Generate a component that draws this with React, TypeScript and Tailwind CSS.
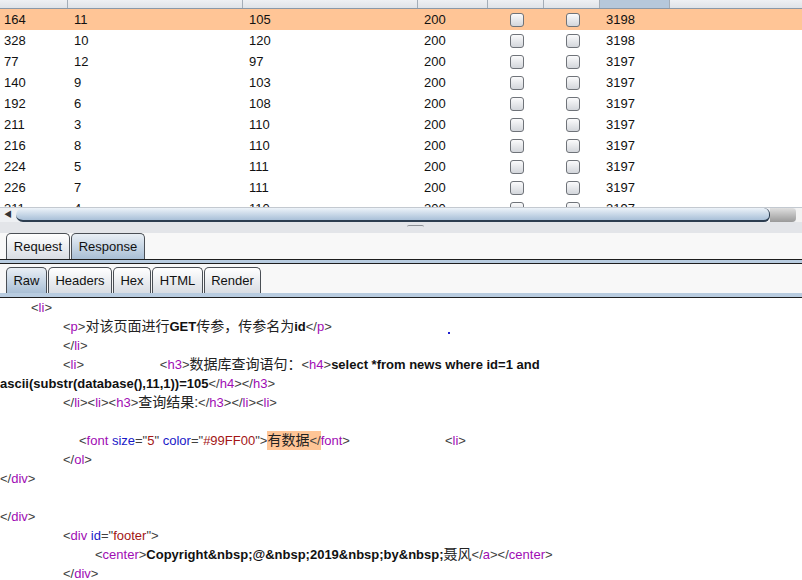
import React from 'react';

type Seg = [string, string];

const rows = [
  ['164', '11', '105', '200', '3198'],
  ['328', '10', '120', '200', '3198'],
  ['77', '12', '97', '200', '3197'],
  ['140', '9', '103', '200', '3197'],
  ['192', '6', '108', '200', '3197'],
  ['211', '3', '110', '200', '3197'],
  ['216', '8', '110', '200', '3197'],
  ['224', '5', '111', '200', '3197'],
  ['226', '7', '111', '200', '3197'],
  ['311', '4', '110', '200', '3197'],
];

const segClass: Record<string, string> = {
  b: 'text-[#404040]',
  t: 'text-[#a00cb4]',
  a: 'text-[#1a1ac8]',
  v: 'text-[#a31515]',
  x: 'text-[#222]',
  B: 'text-[#111] font-bold',
  c: 'text-[#222] text-[14px]',
  h: 'text-[#222] text-[14px] bg-[#ffc596]',
  hb: 'text-[#404040] bg-[#ffc596]',
  g: 'inline-block w-[95px]',
};

// helpers to build tags
const open = (name: string): Seg[] => [['<', 'b'], [name, 't'], ['>', 'b']];
const close = (name: string): Seg[] => [['</', 'b'], [name, 't'], ['>', 'b']];

const lines: { pad: number; segs: Seg[] }[] = [
  { pad: 31, segs: open('li') },
  {
    pad: 63,
    segs: [
      ...open('p'),
      ['对该页面进行', 'c'],
      ['GET', 'B'],
      ['传参，传参名为', 'c'],
      ['id', 'B'],
      ...close('p'),
    ],
  },
  { pad: 63, segs: close('li') },
  {
    pad: 63,
    segs: [
      ...open('li'),
      ['                     ', 'x'],
      ...open('h3'),
      ['数据库查询语句：', 'c'],
      ...open('h4'),
      ['select *from news where id=1 and', 'B'],
    ],
  },
  {
    pad: 0,
    segs: [['ascii(substr(database(),11,1))=105', 'B'], ...close('h4'), ...close('h3')],
  },
  {
    pad: 63,
    segs: [
      ...close('li'),
      ...open('li'),
      ...open('h3'),
      ['查询结果:', 'c'],
      ...close('h3'),
      ...close('li'),
      ...open('li'),
    ],
  },
  { pad: 0, segs: [] },
  {
    pad: 79,
    segs: [
      ['<', 'b'],
      ['font', 't'],
      [' ', 'x'],
      ['size', 'a'],
      ['="', 'b'],
      ['5', 'v'],
      ['"', 'b'],
      [' ', 'x'],
      ['color', 'a'],
      ['="', 'b'],
      ['#99FF00', 'v'],
      ['"', 'b'],
      ['>', 'b'],
      ['有数据', 'h'],
      ['</', 'hb'],
      ['font', 't'],
      ['>', 'b'],
      ['', 'g'],
      ...open('li'),
    ],
  },
  { pad: 63, segs: close('ol') },
  { pad: 0, segs: close('div') },
  { pad: 0, segs: [] },
  { pad: 0, segs: close('div') },
  {
    pad: 63,
    segs: [
      ['<', 'b'],
      ['div', 't'],
      [' ', 'x'],
      ['id', 'a'],
      ['="', 'b'],
      ['footer', 'v'],
      ['"', 'b'],
      ['>', 'b'],
    ],
  },
  {
    pad: 95,
    segs: [
      ...open('center'),
      ['Copyright&nbsp;@&nbsp;2019&nbsp;by&nbsp;', 'B'],
      ['聂风', 'c'],
      ...close('a'),
      ...close('center'),
    ],
  },
  { pad: 63, segs: close('div') },
];

function Checkbox() {
  return (
    <div className="w-[14px] h-[14px] rounded-[3px] border border-[#6f7379] bg-gradient-to-b from-[#fbfbfc] to-[#d3d6db]" />
  );
}

function Tab({ label, active, w }: { label: string; active?: boolean; w: string }) {
  return (
    <div
      className={`${w} h-full flex items-center justify-center rounded-t-[5px] border border-b-0 border-[#4a4f55] text-[13px] text-[#111] ${
        active
          ? 'bg-gradient-to-b from-[#e9eff5] to-[#a9bfd5]'
          : 'bg-gradient-to-b from-[#ffffff] to-[#d9dde3]'
      }`}
    >
      {label}
    </div>
  );
}

export default function App() {
  return (
    <div
      className="w-[802px] h-[580px] overflow-hidden bg-white flex flex-col"
      style={{ fontFamily: '"Liberation Sans", Arial, "Noto Sans CJK SC", sans-serif' }}
    >
      {/* results table */}
      <div className="h-[207px] flex-shrink-0 overflow-hidden flex flex-col text-[13px] text-[#111]">
        <div className="h-[9px] flex-shrink-0 flex border-b border-[#8b98a6] bg-gradient-to-b from-[#eef0f3] to-[#dfe3e8]">
          <div className="w-[68px] border-r border-[#a4adb7]" />
          <div className="w-[175px] border-r border-[#a4adb7]" />
          <div className="w-[175px] border-r border-[#a4adb7]" />
          <div className="w-[70px] border-r border-[#a4adb7]" />
          <div className="w-[56px] border-r border-[#a4adb7]" />
          <div className="w-[56px] border-r border-[#a4adb7]" />
          <div className="w-[70px] border-r border-[#a4adb7] bg-[#b6c8db]" />
          <div className="flex-1" />
        </div>
        {rows.map((r, i) => (
          <div
            key={i}
            className={`h-[21px] flex-shrink-0 flex items-center ${i === 0 ? 'bg-[#ffc596]' : ''}`}
          >
            <div className="w-[68px] pl-[4px]">{r[0]}</div>
            <div className="w-[175px] pl-[6px]">{r[1]}</div>
            <div className="w-[175px] pl-[6px]">{r[2]}</div>
            <div className="w-[70px] pl-[6px]">{r[3]}</div>
            <div className="w-[56px] flex justify-center pl-[2px]">
              <Checkbox />
            </div>
            <div className="w-[56px] flex justify-center pl-[2px]">
              <Checkbox />
            </div>
            <div className="w-[70px] pl-[6px]">{r[4]}</div>
          </div>
        ))}
      </div>

      {/* horizontal scrollbar */}
      <div className="h-[15px] flex-shrink-0 flex items-stretch bg-[#eef0f3] border-t border-[#c3c9d0]">
        <div className="w-[16px] flex items-center justify-center text-[8px] text-[#333]">◀</div>
        <div className="w-[754px] rounded-l-[10px] rounded-r-[9px] border-b-2 border-r border-[#2c3d50] bg-gradient-to-b from-[#edf3f9] to-[#a9c0d8]" />
        <div className="w-[26px] bg-gradient-to-b from-[#e0e0e0] to-[#9a9a9a] rounded-r-[4px]" />
        <div className="flex-1 bg-[#f3f3f3]" />
      </div>

      {/* splitter */}
      <div className="h-[11px] flex-shrink-0 bg-[#e3e5e9] flex justify-center pt-[3px]">
        <div className="w-[17px] h-[3px] border-t border-[#8b8f95] rounded-t-[2px] ml-[28px]" />
      </div>

      {/* Request / Response tabs */}
      <div className="flex-shrink-0 bg-[#f8f8f8] flex flex-col">
        <div className="h-[26px] flex pl-[6px] gap-[1px]">
          <Tab label="Request" w="w-[64px]" />
          <Tab label="Response" w="w-[74px]" active />
        </div>
        <div className="h-[5px] border-y border-[#1e1e1e] bg-[#b8cce0]" />
        <div className="h-[3px]" />
        <div className="h-[26px] flex pl-[6px] gap-[1px]">
          <Tab label="Raw" w="w-[41px]" active />
          <Tab label="Headers" w="w-[64px]" />
          <Tab label="Hex" w="w-[38px]" />
          <Tab label="HTML" w="w-[51px]" />
          <Tab label="Render" w="w-[57px]" />
        </div>
        <div className="h-[5px] border-b border-[#1e1e1e] bg-[#b8cce0]" />
      </div>

      {/* raw response body */}
      <div className="flex-1 bg-white overflow-hidden relative">
        <div className="absolute left-[448px] top-[34px] w-[2px] h-[2px] bg-[#2020d0]" />
        {lines.map((l, i) => (
          <div
            key={i}
            className="h-[19px] flex items-center whitespace-pre text-[13px] leading-[19px]"
            style={{ paddingLeft: l.pad }}
          >
            {l.segs.map(([t, k], j) => (
              <span key={j} className={segClass[k]}>
                {t}
              </span>
            ))}
          </div>
        ))}
      </div>
    </div>
  );
}
